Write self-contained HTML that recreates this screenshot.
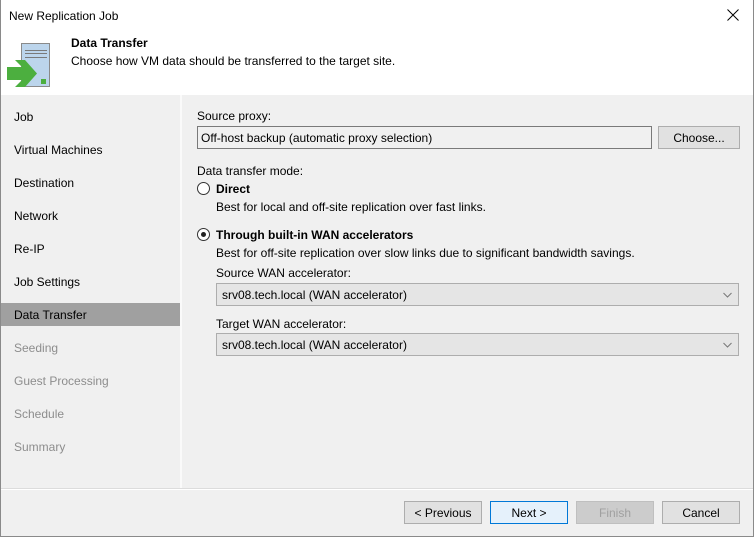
<!DOCTYPE html>
<html><head><style>
*{margin:0;padding:0;box-sizing:border-box}
body{width:754px;height:537px;font-family:"Liberation Sans",sans-serif;font-size:12px;color:#000;background:#f0f0f0;position:relative;overflow:hidden}
.a{position:absolute;white-space:nowrap}
.win{position:absolute;left:0;top:0;width:754px;height:537px;border:1px solid #8a8a8a;border-top:none}
.btn{position:absolute;height:23px;border:1px solid #adadad;background:#e1e1e1;text-align:center;line-height:22px}
.dd{position:absolute;height:23px;border:1px solid #adadad;background:#e5e5e5;padding-left:5px;line-height:22px}
.nav{position:absolute;left:14px}
.g{color:#8d8d8d}
</style></head><body>
<div class="a" style="left:0;top:0;width:754px;height:95px;background:#fff"></div>
<div class="a" style="left:9px;top:9px;font-size:12px">New Replication Job</div>
<svg class="a" style="left:726px;top:8px" width="14" height="14"><path d="M1.5 1.5 L12.5 12.5 M12.5 1.5 L1.5 12.5" stroke="#000" stroke-width="1"/></svg>
<svg class="a" style="left:0;top:40px" width="56" height="52">
<rect x="21.5" y="3.5" width="28" height="43" fill="#bcd5ec" stroke="#8a8a8a"/>
<line x1="25" y1="10.5" x2="47" y2="10.5" stroke="#7a7a7a"/><line x1="25" y1="13.5" x2="47" y2="13.5" stroke="#7a7a7a"/><line x1="25" y1="17.5" x2="47" y2="17.5" stroke="#7a7a7a"/>
<rect x="41" y="39" width="5" height="5" fill="#4caf3f"/>
<path d="M7 27 H22 L15 20 H25 L37 33.5 L25 47 H15 L22 40 H7 Z" fill="#4caf3f"/>
</svg>
<div class="a" style="left:71px;top:36px;font-weight:bold">Data Transfer</div>
<div class="a" style="left:71px;top:54px">Choose how VM data should be transferred to the target site.</div>
<div class="a" style="left:180px;top:95px;width:2px;height:393px;background:#fafafa"></div>
<div class="a" style="left:0;top:303px;width:180px;height:23px;background:#a0a0a0"></div>
<div class="a nav" style="top:110px">Job</div>
<div class="a nav" style="top:143px">Virtual Machines</div>
<div class="a nav" style="top:176px">Destination</div>
<div class="a nav" style="top:209px">Network</div>
<div class="a nav" style="top:242px">Re-IP</div>
<div class="a nav" style="top:275px">Job Settings</div>
<div class="a nav" style="top:308px">Data Transfer</div>
<div class="a nav g" style="top:341px">Seeding</div>
<div class="a nav g" style="top:374px">Guest Processing</div>
<div class="a nav g" style="top:407px">Schedule</div>
<div class="a nav g" style="top:440px">Summary</div>

<div class="a" style="left:197px;top:109px">Source proxy:</div>
<div class="a" style="left:197px;top:126px;width:455px;height:23px;border:1px solid #7a7a7a;background:#f0f0f0;padding-left:3px;line-height:22px">Off-host backup (automatic proxy selection)</div>
<div class="btn" style="left:658px;top:126px;width:82px">Choose...</div>
<div class="a" style="left:197px;top:164px">Data transfer mode:</div>
<div class="a" style="left:197px;top:182px;width:13px;height:13px;border:1px solid #333;border-radius:50%;background:#fff"></div>
<div class="a" style="left:216px;top:182px;font-weight:bold">Direct</div>
<div class="a" style="left:216px;top:200px">Best for local and off-site replication over fast links.</div>
<div class="a" style="left:197px;top:228px;width:13px;height:13px;border:1px solid #333;border-radius:50%;background:#fff"></div>
<div class="a" style="left:201px;top:232px;width:5px;height:5px;border-radius:50%;background:#222"></div>
<div class="a" style="left:216px;top:228px;font-weight:bold">Through built-in WAN accelerators</div>
<div class="a" style="left:216px;top:246px">Best for off-site replication over slow links due to significant bandwidth savings.</div>
<div class="a" style="left:216px;top:266px">Source WAN accelerator:</div>
<div class="dd" style="left:216px;top:283px;width:523px">srv08.tech.local (WAN accelerator)<svg class="a" style="right:6px;top:8px" width="9" height="6"><path d="M0.5 1 L4.5 5 L8.5 1" fill="none" stroke="#777"/></svg></div>
<div class="a" style="left:216px;top:317px">Target WAN accelerator:</div>
<div class="dd" style="left:216px;top:333px;width:523px">srv08.tech.local (WAN accelerator)<svg class="a" style="right:6px;top:8px" width="9" height="6"><path d="M0.5 1 L4.5 5 L8.5 1" fill="none" stroke="#777"/></svg></div>

<div class="a" style="left:0;top:488px;width:754px;height:1px;background:#dcdcdc"></div>
<div class="a" style="left:0;top:489px;width:754px;height:1px;background:#fff"></div>
<div class="btn" style="left:404px;top:501px;width:78px">&lt; Previous</div>
<div class="btn" style="left:490px;top:501px;width:78px;border-color:#0078d7;background:#e5f1fb">Next &gt;</div>
<div class="btn" style="left:576px;top:501px;width:78px;border-color:#bfbfbf;background:#cccccc;color:#a0a0a0">Finish</div>
<div class="btn" style="left:662px;top:501px;width:78px">Cancel</div>
<div class="win"></div>
</body></html>
